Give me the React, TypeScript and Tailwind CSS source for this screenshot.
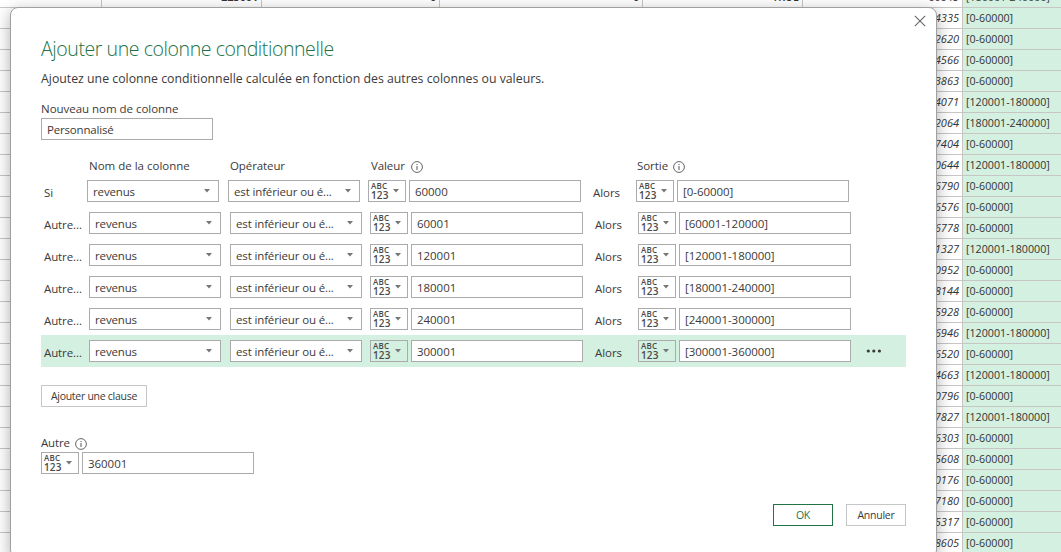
import React from "react";

const tail = ["4335", "2620", "4566", "3863", "4071", "2064", "7404", "0644", "6790", "6576", "6778", "1327", "0952", "8144", "5928", "6946", "6520", "4663", "0796", "7827", "6303", "5608", "0176", "7180", "5317", "8605"];
const A = "[0-60000]";
const B = "[120001-180000]";
const C = "[180001-240000]";
const bands = [A, A, A, A, B, C, A, B, A, A, A, B, A, A, A, B, A, B, A, B, A, A, A, A, A, A];
const rows = tail.map((t, i) => ({ n: t, band: bands[i] }));

const clauses = [
  { value: "60000", out: "[0-60000]" },
  { value: "60001", out: "[60001-120000]" },
  { value: "120001", out: "[120001-180000]" },
  { value: "180001", out: "[180001-240000]" },
  { value: "240001", out: "[240001-300000]" },
  { value: "300001", out: "[300001-360000]" },
];

function Cell({ className, children }: { className: string; children?: React.ReactNode }) {
  return <div className={`h-[21px] shrink-0 border-r border-b border-[#c8c6c4] leading-5 whitespace-nowrap ${className}`}>{children}</div>;
}

function SheetRow({ first, n, band, cells }: { first: string; n: string; band: string; cells: string[] }) {
  return (
    <div className="flex">
      <Cell className="w-[102px]" />
      <Cell className="w-[160px] pr-[3px] text-right font-bold">{first}</Cell>
      <Cell className="w-[178px] pr-[3px] text-right font-bold">{cells[0]}</Cell>
      <Cell className="w-[203px] pr-[3px] text-right font-bold">{cells[1]}</Cell>
      <Cell className="w-[160px] pr-[3px] text-right font-semibold">{cells[2]}</Cell>
      <Cell className="w-[160px] pr-[3px] text-right text-[11px] italic">{n}</Cell>
      <Cell className="w-[120px] bg-[#d3f0e0] pl-[3px]">{band}</Cell>
    </div>
  );
}

function Caret() {
  return (
    <svg width="6" height="4" viewBox="0 0 6 4" className="mb-px shrink-0">
      <path d="M0 0h6L3 3.6z" fill="#777" />
    </svg>
  );
}

function Info() {
  return (
    <svg width="12" height="12" viewBox="0 0 12 12" className="mt-px shrink-0" fill="none" stroke="#555">
      <circle cx="6" cy="6" r="5.4" strokeWidth="0.9" />
      <path d="M6 5v4M6 3v1" strokeWidth="1" />
    </svg>
  );
}

function Select({ children }: { children: React.ReactNode }) {
  return (
    <div className="flex h-[22px] w-[132px] shrink-0 items-center justify-between border border-[#ababab] bg-white pr-[8px] pl-[5px]">
      <span className="pt-px tracking-[-0.14px] whitespace-nowrap">{children}</span>
      <Caret />
    </div>
  );
}

function TypePicker() {
  return (
    <div className="flex h-[22px] w-[38px] shrink-0 items-center justify-between border border-[#ababab] pr-[6px] pl-[2px]">
      <div className="flex flex-col pb-px font-semibold text-[#4a4a4a]">
        <span className="h-[8px] text-[8px] leading-[8px] tracking-[0.2px]">ABC</span>
        <span className="h-[10px] text-[10px] leading-[10px] tracking-[0.1px]">123</span>
      </div>
      <Caret />
    </div>
  );
}

function Field({ children }: { children: React.ReactNode }) {
  return <div className="flex h-[22px] w-[172px] shrink-0 items-center border border-[#ababab] bg-white pt-px pl-[5px] tracking-[-0.04px]">{children}</div>;
}

export default function App() {
  return (
    <div className="relative h-[552px] w-[1061px] overflow-hidden bg-white font-['Open_Sans',sans-serif] text-[11.5px] text-[#3b3a39]">
      <div className="-mt-[13px] w-[1083px] text-[10.7px] text-[#333]">
        <SheetRow first="225001" cells={["0", "0", "TRUE"]} n="60645" band="[180001-240000]" />
        {rows.map((r, i) => (
          <SheetRow key={i} first="" cells={["", "", ""]} n={r.n} band={r.band} />
        ))}
      </div>

      <div className="absolute top-[7px] left-[10px] h-[551px] w-[927px] rounded-[8px] border border-[#a0a0a0] bg-white pl-[30px] shadow-[0_4px_16px_rgba(0,0,0,0.32)]">
        <svg width="12" height="12" viewBox="0 0 12 12" className="absolute top-[7px] right-[10px]" stroke="#666" strokeWidth="1.1">
          <path d="M.8.8l10.4 10.4M11.2.8L.8 11.2" />
        </svg>
        <h1 className="mt-[28px] h-[26px] text-[19.5px] leading-[26px] font-light tracking-[-0.42px] whitespace-nowrap text-[#217346]">Ajouter une colonne conditionnelle</h1>
        <p className="mt-[8px] h-[18px] text-[12.3px] leading-[18px] whitespace-nowrap">Ajoutez une colonne conditionnelle calculée en fonction des autres colonnes ou valeurs.</p>
        <div className="mt-[13px] h-4 leading-4 tracking-[-0.03px]">Nouveau nom de colonne</div>
        <div className="mt-px"><Field><span className="tracking-[-0.18px]">Personnalisé</span></Field></div>

        <div className="mt-[18px] flex h-4 items-center leading-4">
          <div className="ml-[48px] w-[141px]">Nom de la colonne</div>
          <div className="w-[141px] tracking-[-0.1px]">Opérateur</div>
          <div className="flex w-[266px] items-center gap-[6px] tracking-[-0.1px]">Valeur <Info /></div>
          <div className="flex items-center gap-[5px] tracking-[-0.05px]">Sortie <Info /></div>
        </div>

        <div className="mt-[1px]">
          {clauses.map((c, i) => (
            <div key={c.value} className={`flex h-8 w-[865px] items-center ${i === 5 ? "bg-[#d3f0e0]" : ""}`}>
              <div className={`shrink-0 pt-[3px] pl-[3px] tracking-[-0.1px] ${i === 0 ? "w-[46px]" : "w-[48px]"}`}>{i === 0 ? "Si" : "Autre..."}</div>
              <Select>revenus</Select>
              <div className="w-[9px] shrink-0" />
              <Select>est inférieur ou é...</Select>
              <div className="w-[8px] shrink-0" />
              <TypePicker />
              <div className="w-[3px] shrink-0" />
              <Field>{c.value}</Field>
              <div className="w-[55px] shrink-0 pt-[3px] pl-[12px] tracking-[-0.05px]">Alors</div>
              <TypePicker />
              <div className="w-[3px] shrink-0" />
              <Field>{c.out}</Field>
              {i === 5 && (
                <svg width="16" height="4" viewBox="0 0 16 4" className="ml-[15px]" fill="#3b3a39">
                  <circle cx="2.3" cy="2" r="1.6" /><circle cx="7.8" cy="2" r="1.6" /><circle cx="13.4" cy="2" r="1.6" />
                </svg>
              )}
            </div>
          ))}
        </div>

        <button className="mt-[18px] flex h-[22px] w-[106px] items-center justify-center border border-[#c6c6c6] pt-px text-[10.5px] tracking-[-0.27px] whitespace-nowrap">Ajouter une clause</button>
        <div className="mt-[28px] flex h-4 items-center gap-[5px] leading-4 tracking-[-0.15px]">Autre <Info /></div>
        <div className="mt-[1px] flex gap-[3px]"><TypePicker /><Field>360001</Field></div>

        <div className="mt-[30px] flex w-[865px] justify-end gap-[13px] text-[10.5px] tracking-[-0.25px]">
          <button className="h-[22px] w-[60px] border border-[#217346] pt-px text-[#217346]">OK</button>
          <button className="h-[22px] w-[60px] border border-[#c6c6c6] pt-px">Annuler</button>
        </div>
      </div>
    </div>
  );
}
